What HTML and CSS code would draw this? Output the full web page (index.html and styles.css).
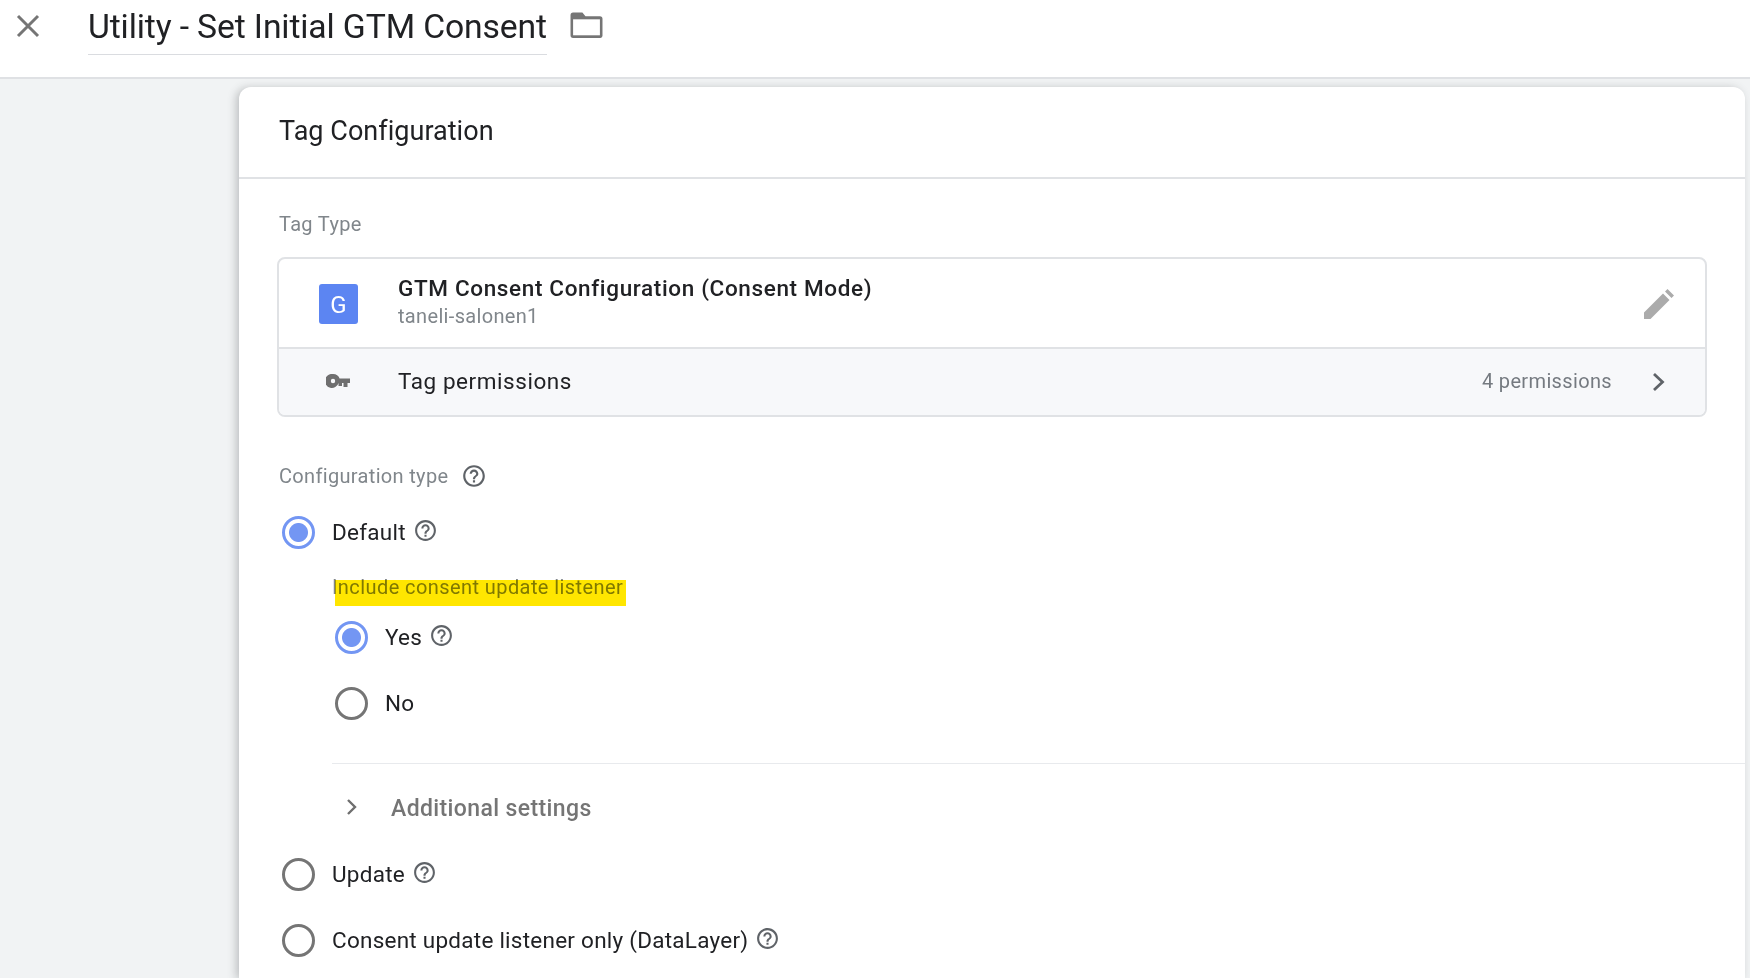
FILE: index.html
```html
<!DOCTYPE html>
<html lang="en">
<head>
<meta charset="utf-8">
<title>Utility - Set Initial GTM Consent</title>
<link rel="stylesheet" href="styles.css">
</head>
<body>
<header class="topbar">
  <svg class="close-icon" viewBox="0 0 24 24"><path d="M2 2 L22 22 M22 2 L2 22"/></svg>
  <h1 class="tag-name">Utility - Set Initial GTM Consent</h1>
  <svg class="folder-icon" viewBox="0 0 32 26"><path d="M3 .5h9l3 3.500h14a2.500 2.500 0 0 1 2.500 2.500v16.500a2 2 0 0 1-2 2H3a2.500 2.500 0 0 1-2.500-2.500V3A2.500 2.500 0 0 1 3 .5z"/><rect x="3" y="7" width="26" height="15.500" fill="#fff"/></svg>
</header>
<main class="canvas">
  <section class="card">
    <div class="card-head">Tag Configuration</div>
    <div class="card-body">
      <div class="field-label tag-type-label">Tag Type</div>
      <div class="type-box">
        <div class="type-row">
          <div class="g-icon">G</div>
          <div class="type-text">
            <div class="type-name">GTM Consent Configuration (Consent Mode)</div>
            <div class="type-owner">taneli-salonen1</div>
          </div>
          <svg class="pencil" viewBox="0 0 30 30"><path d="M0 30v-6.500L19 4.500l6.500 6.500L6.500 30zM21 2.500 23.500 0 30 6.500 27.500 9z"/></svg>
        </div>
        <div class="perm-row">
          <svg class="key" viewBox="0 0 24 14"><path fill-rule="evenodd" d="M7 0a7 7 0 0 1 6.600 4.500H24v4.500h-2.500v4h-4V9h-1.500v3h-3.500l.1-3A7 7 0 1 1 7 0zm0 4.800a2.200 2.200 0 1 0 0 4.400 2.200 2.200 0 0 0 0-4.400z"/></svg>
          <div class="perm-title">Tag permissions</div>
          <div class="perm-count">4 permissions</div>
          <svg class="chev" viewBox="0 0 14 20"><path d="M2 2l8.500 8L2 18"/></svg>
        </div>
      </div>

      <div class="config-label">
        <span class="field-label">Configuration type</span>
        <svg class="help help-lg" viewBox="0 0 24 24"><use href="#help"/></svg>
      </div>

      <div class="radio-row first">
        <span class="radio on"></span><span class="radio-text">Default</span>
        <svg class="help" viewBox="0 0 24 24"><use href="#help"/></svg>
      </div>

      <div class="nested">
        <div class="listener-label">Include consent update listener<span class="marker"></span></div>
        <div class="radio-row yes">
          <span class="radio on"></span><span class="radio-text">Yes</span>
          <svg class="help" viewBox="0 0 24 24"><use href="#help"/></svg>
        </div>
        <div class="radio-row no">
          <span class="radio"></span><span class="radio-text">No</span>
        </div>
        <div class="additional">
          <svg class="chev-small" viewBox="0 0 14 20"><path d="M3 3l7 7-7 7"/></svg>
          <span>Additional settings</span>
        </div>
      </div>

      <div class="radio-row update">
        <span class="radio"></span><span class="radio-text">Update</span>
        <svg class="help" viewBox="0 0 24 24"><use href="#help"/></svg>
      </div>
      <div class="radio-row listener">
        <span class="radio"></span><span class="radio-text">Consent update listener only (DataLayer)</span>
        <svg class="help" viewBox="0 0 24 24"><use href="#help"/></svg>
      </div>
    </div>
  </section>
</main>
<svg class="defs" width="0" height="0">
  <symbol id="help" viewBox="0 0 24 24">
    <path d="M11 18h2v-2h-2v2zm1-16C6.480 2 2 6.480 2 12s4.480 10 10 10 10-4.480 10-10S17.520 2 12 2zm0 18c-4.410 0-8-3.590-8-8s3.590-8 8-8 8 3.590 8 8-3.590 8-8 8zm0-14c-2.210 0-4 1.790-4 4h2c0-1.100.9-2 2-2s2 .9 2 2c0 2-3 1.750-3 5h2c0-2.250 3-2.500 3-5 0-2.210-1.790-4-4-4z"/>
  </symbol>
</svg>
</body>
</html>
```
FILE: styles.css
```css
* { box-sizing: border-box; }
html, body { margin: 0; height: 978px; overflow: hidden; }
body { background: #f1f3f4; font-family: Roboto, "Liberation Sans", sans-serif; color: #202124; }
.defs { display: block; }

.topbar { height: 79px; background: #fff; border-bottom: 2px solid #dfe1e4; display: flex; align-items: flex-start; position: relative; }
.close-icon { width: 24px; height: 24px; margin: 14px 0 0 16px; stroke: #757575; stroke-width: 3; fill: none; flex: none; }
.tag-name { margin: 0 0 0 48px; height: 55px; padding-top: 7px; border-bottom: 1px solid #dadce0; font: 400 33.700px/40px Roboto, sans-serif; letter-spacing: -0.13px; white-space: nowrap; color: #202124; }
.folder-icon { width: 33px; height: 27px; margin: 12px 0 0 23px; fill: #757575; flex: none; }

.canvas { padding: 8px 5px 0 239px; height: 899px; }
.card { background: #fff; border-radius: 12px 12px 0 0; height: 891px; box-shadow: -3px 1px 8px rgba(60,64,67,.28); }
.card-head { height: 92px; border-bottom: 2px solid #e0e2e5; padding: 29px 0 0 40px; font-size: 27px; letter-spacing: .03px; line-height: 30px; color: #202124; }
.card-body { padding: 33px 38px 0 38px; }

.field-label { font-size: 20px; line-height: 24px; color: #80868b; letter-spacing: .33px; }
.tag-type-label { padding-left: 2px; }

.type-box { margin-top: 21px; height: 160px; border: 2px solid #e0e2e5; border-radius: 8px; overflow: hidden; }
.type-row { height: 90px; display: flex; align-items: center; border-bottom: 2px solid #e0e2e5; padding: 0 31px 0 40px; }
.g-icon { width: 39px; height: 40px; border-radius: 3px; background: #5c85f2; color: #fff; text-align: center; font-size: 24px; line-height: 42px; flex: none; margin-top: 2px; }
.type-text { margin-left: 40px; flex: 1; }
.type-name { font-size: 22.500px; line-height: 27px; font-weight: 500; letter-spacing: .65px; color: #202124; }
.type-owner { font-size: 20px; line-height: 29px; letter-spacing: .33px; color: #80868b; }
.pencil { width: 30px; height: 30px; fill: #ababab; flex: none; margin-top: 2px; }

.perm-row { height: 66px; background: #f7f8fa; display: flex; align-items: center; padding: 0 39px 0 47px; }
.key { width: 24px; height: 14px; fill: #6f6f6f; flex: none; margin-top: -2px; }
.perm-title { margin-left: 48px; font-size: 22.500px; letter-spacing: .56px; flex: 1; color: #202124; margin-top: -2px; }
.perm-count { font-size: 20px; letter-spacing: .35px; color: #757a80; margin-right: 40px; margin-top: -2px; }
.chev { width: 14px; height: 20px; stroke: #5f6368; stroke-width: 2.800; fill: none; flex: none; }

.config-label { display: flex; align-items: center; margin: 46px 0 0 2px; height: 26px; }
.help { width: 25px; height: 25px; fill: #5f6368; margin-left: 7px; flex: none; position: relative; top: -2px; }
.help-lg { width: 26px; height: 26px; margin-left: 13px; top: 0; }

.radio-row { display: flex; align-items: center; height: 38px; }
.radio { width: 33px; height: 33px; border-radius: 50%; border: 3.500px solid #757575; margin-left: 5px; flex: none; background: #fff; }
.radio.on { border-color: #7396f3; background: radial-gradient(circle, #7396f3 0 9px, #fff 10px); }
.radio-text { margin-left: 17px; font-size: 22.500px; letter-spacing: .25px; color: #202124; white-space: nowrap; }
.first { margin-top: 24px; }

.nested { margin-left: 55px; }
.listener-label { position: relative; margin-top: 24px; height: 24px; width: max-content; font-size: 20px; line-height: 24px; letter-spacing: .42px; color: #80868b; }
.marker { position: absolute; left: 3px; right: -3px; top: 5px; height: 26px; background: #ffe600; mix-blend-mode: multiply; }
.yes { margin-top: 19px; }
.no { margin-top: 28px; }
.nested .radio { margin-left: 3px; }
.additional { margin-top: 41px; height: 90px; border-top: 1px solid #e8eaed; display: flex; align-items: center; padding-left: 13px; margin-right: -38px; font-size: 23px; font-weight: 500; letter-spacing: .38px; color: #757575; }
.chev-small { width: 14px; height: 20px; stroke: #6f6f6f; stroke-width: 2.400; fill: none; flex: none; margin-right: 32px; margin-top: -3px; }

.update { margin-top: 2px; }
.listener { margin-top: 28px; }
```
